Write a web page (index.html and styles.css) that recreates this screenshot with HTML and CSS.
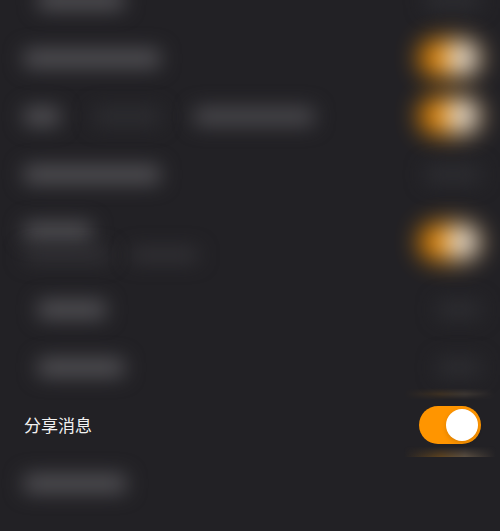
FILE: index.html
```html
<!DOCTYPE html>
<html lang="zh-CN">
<head>
  <meta charset="UTF-8" />
  <meta name="viewport" content="width=device-width, initial-scale=1.0" />
  <title>分享消息</title>
  <link rel="stylesheet" href="styles.css">
</head>
<body>
  <main class="settings">
    <div class="row row-first row-sub">
      <span class="bar w-86"></span>
      <span class="bar bar-faint value"></span>
    </div>
    <label class="row">
      <span class="bar w-136"></span>
      <input type="checkbox" class="switch blurred" checked />
    </label>
    <label class="row">
      <span class="parts">
        <span class="bar w-36"></span>
        <span class="bar bar-faint w-68"></span>
        <span class="bar bar-dim w-120"></span>
      </span>
      <input type="checkbox" class="switch blurred" checked />
    </label>
    <div class="row">
      <span class="bar w-136"></span>
      <span class="bar bar-faint value"></span>
    </div>
    <label class="row row-tall">
      <span class="lines">
        <span class="bar w-68"></span>
        <span class="parts parts-note">
          <span class="bar bar-note w-86"></span>
          <span class="bar bar-note w-68"></span>
        </span>
      </span>
      <input type="checkbox" class="switch blurred" checked />
    </label>
    <div class="row row-sub">
      <span class="bar w-68"></span>
      <span class="bar bar-faint value value-short"></span>
    </div>
    <div class="row row-sub">
      <span class="bar w-86"></span>
      <span class="bar bar-faint value value-short"></span>
    </div>
    <!-- the row in focus -->
    <div class="row row-focus">
      <label class="row-name" for="share">分享消息</label>
      <input type="checkbox" class="switch" id="share" checked />
    </div>
    <div class="row">
      <span class="bar w-102"></span>
    </div>
  </main>
</body>
</html>
```

FILE: styles.css
```css
* {
  box-sizing: border-box;
}
body {
  margin: 0;
  min-height: 100vh;
  background: #222125;
  color: #f2f2f2;
  font-family: "Noto Sans CJK SC", sans-serif;
  font-size: 17px;
  overflow: hidden;
}
.row {
  display: flex;
  align-items: center;
  justify-content: space-between;
  height: 58px;
  padding: 0 19px 0 24px;
}
.row-first {
  margin-top: -29px;
}
.row-sub {
  padding-left: 38px;
}
.row-tall {
  height: 77px;
}

/* out of focus text */
.bar {
  display: block;
  height: 17px;
  border-radius: 4px;
  background: #565559;
  filter: blur(10px);
}
.bar-dim {
  background: #4d4c50;
}
.bar-faint {
  background: #2e2e32;
}
.bar-note {
  height: 12px;
  background: #37363a;
}
.w-36 { width: 36px; }
.w-68 { width: 68px; }
.w-86 { width: 86px; }
.w-102 { width: 102px; }
.w-120 { width: 120px; }
.w-136 { width: 136px; }
.value {
  width: 56px;
}
.value-short {
  width: 44px;
}
.parts {
  display: flex;
  gap: 33px;
}
.parts-note {
  gap: 20px;
}
.lines {
  display: flex;
  flex-direction: column;
  gap: 9px;
}

.switch {
  appearance: none;
  display: flex;
  align-items: center;
  width: 62px;
  height: 38px;
  margin: 0;
  padding: 0 3px;
  border-radius: 19px;
  background: #55545a;
  cursor: pointer;
}
.switch::before {
  content: "";
  width: 32px;
  height: 32px;
  border-radius: 50%;
  background: #fff;
  box-shadow: 0 2px 5px rgba(0, 0, 0, 0.15);
}
.switch:checked {
  justify-content: flex-end;
  background: #ff9500;
}
.switch.blurred {
  filter: blur(12px);
  opacity: 0.9;
}

.row-focus {
  position: relative;
}
.row-name {
  line-height: 24px;
}
/* glow above and below the focused switch */
.row-focus::before,
.row-focus::after {
  content: "";
  position: absolute;
  right: 4px;
  width: 92px;
  height: 12px;
  background: linear-gradient(to right, transparent, #5d4320 40%, #5c5042 66%, transparent);
}
.row-focus::before {
  top: -8px;
  opacity: 0.45;
  mask-image: linear-gradient(transparent, #000 50%, transparent);
}
.row-focus::after {
  bottom: -3px;
  mask-image: linear-gradient(transparent 10%, #000);
}
```
